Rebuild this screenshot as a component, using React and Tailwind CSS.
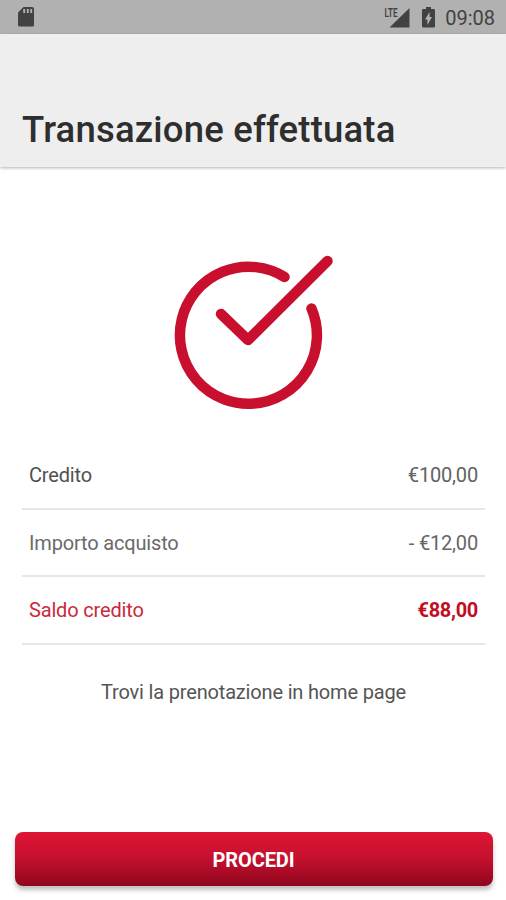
const rows = [
  { label: 'Credito', value: '€100,00', labelStyle: 'text-[#505050]', valueStyle: 'text-[#626262]' },
  { label: 'Importo acquisto', value: '- €12,00', labelStyle: 'text-[#6a6a6a]', valueStyle: 'text-[#666666]' },
  { label: 'Saldo credito', value: '€88,00', labelStyle: 'text-[#c92a3b]', valueStyle: 'text-[#bf0f23] font-bold tracking-[-0.3px]' },
];

const StatusBar = () => {
  return (
    <div className="flex h-[34px] items-center justify-between bg-[#b1b1b1] pl-[17px] pr-[11px] text-[#424242]">
      <svg width="18" height="20" viewBox="0 0 18 20">
        <path d="M6.5 0H15a2 2 0 0 1 2 2v16a1.5 1.5 0 0 1-1.5 1.5h-13A1.5 1.5 0 0 1 1 18V5.5z" fill="currentColor" />
        <path d="M7.2 2v4M10.8 2v4M14.2 2v4" stroke="#b1b1b1" strokeWidth="1.9" />
      </svg>
      <div className="flex items-center">
        <svg width="27" height="22" viewBox="0 0 27 22">
          <path d="M25.5 2v19.5h-20z" fill="currentColor" />
          <rect x="0" y="0" width="14" height="11" fill="#b1b1b1" />
          <text x="0.5" y="10.8" fontFamily="Roboto, sans-serif" fontSize="12.5" fontWeight="600" textLength="13" lengthAdjust="spacingAndGlyphs" fill="currentColor">LTE</text>
        </svg>
        <svg className="ml-[10.5px] mr-[-0.5px]" width="13" height="21" viewBox="0 0 13 21">
          <path d="M4 0h5v2h2.7A1.3 1.3 0 0 1 13 3.3v15.9a1.3 1.3 0 0 1-1.3 1.3H1.3A1.3 1.3 0 0 1 0 19.2V3.3A1.3 1.3 0 0 1 1.3 2H4z" fill="currentColor" />
          <path d="M7.6 5v5H10l-4.6 8v-5.5H3z" fill="#b1b1b1" />
        </svg>
        <span className="ml-[11px] pt-[2px] text-[20px] leading-[32px]">09:08</span>
      </div>
    </div>
  );
};

const App = () => {
  return (
    <div className="flex h-[900px] w-full flex-col bg-white font-['Roboto',sans-serif]">
      <StatusBar />
      <header className="flex h-[133px] items-end bg-[#eeeeee] pb-[15px] pl-[22px] shadow-[0_1px_3px_rgba(0,0,0,0.3)]">
        <h1 className="text-[36.5px] font-medium leading-[44px] tracking-[0.18px] text-[#2e2e2e]">Transazione effettuata</h1>
      </header>

      <main className="flex flex-1 flex-col pl-[22px] pr-[21px]">
        <div className="flex h-[275px] pl-[138px] pt-[73px]">
          <svg width="190" height="180" viewBox="160.5 240 190 180" fill="none" stroke="#c8102e" strokeWidth="10.5" strokeLinecap="round" strokeLinejoin="round">
            <path d="M285 277A68.5 68.5 0 1 0 312 308.5" />
            <path d="M221.5 314L248.5 340L328 261" />
          </svg>
        </div>

        {rows.map((row) => (
          <div key={row.label} className="flex h-[67.6px] items-center justify-between border-b-2 border-[#e6e6e6] pl-[7px] pr-[7px] pt-[1px] text-[20px] tracking-[-0.17px]">
            <span className={row.labelStyle}>{row.label}</span>
            <span className={row.valueStyle}>{row.value}</span>
          </div>
        ))}

        <p className="mt-[32px] text-center text-[20px] leading-[30px] tracking-[-0.17px] text-[#555555]">Trovi la prenotazione in home page</p>
      </main>

      <footer className="pb-[14px] pl-[14.5px] pr-[13.5px]">
        <button className="h-[54px] w-full rounded-[8px] bg-linear-to-b from-[#e01535] via-[#c4102e] to-[#8f061d] pt-[2px] text-[20px] font-bold tracking-[-0.1px] text-white shadow-[0_4px_4px_rgba(0,0,0,0.25)]">
          PROCEDI
        </button>
      </footer>
    </div>
  );
};

export default App;
